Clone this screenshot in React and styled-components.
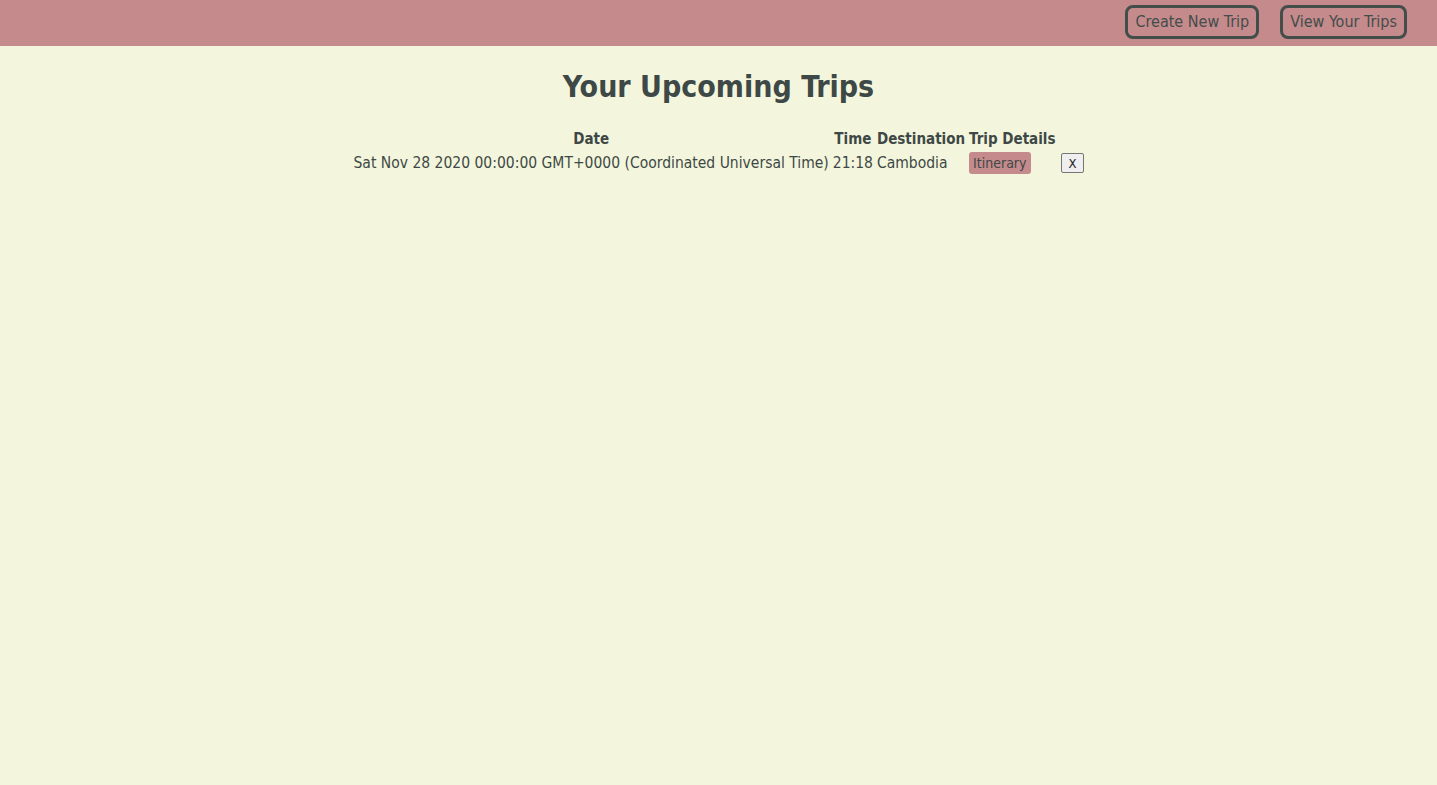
import React from "react";
import styled, { createGlobalStyle } from "styled-components";

const Global = createGlobalStyle`
  html, body { margin: 0; padding: 0; height: 100%; }
  body {
    background: #f3f6dc;
    color: #3e4846;
    font-family: "DejaVu Sans Condensed", "DejaVu Sans", sans-serif;
  }
  #root { min-height: 100%; }
`;

const Page = styled.div`
  min-height: 785px;
  background: #f3f6dc;
`;

const NavBar = styled.nav`
  height: 46px;
  background: #c48a8c;
  display: flex;
  align-items: center;
  justify-content: flex-end;
  gap: 21px;
  padding-right: 30px;
  box-sizing: border-box;
`;

const NavButton = styled.button`
  height: 34px;
  padding: 0 7px;
  background: transparent;
  border: 3px solid #434d4a;
  border-radius: 8px;
  color: #434d4a;
  font-family: inherit;
  font-size: 16px;
  cursor: pointer;
  margin-top: -3px;
`;

const Title = styled.h1`
  margin: 23px 0 22px;
  text-align: center;
  font-size: 30px;
  font-weight: bold;
  color: #3e4846;
  line-height: 36px;
`;

const Table = styled.table`
  margin: 0 auto;
  border-spacing: 2px;
  font-size: 15.5px;
  color: #3e4846;
`;

const Th = styled.th`
  padding: 1px;
  text-align: center;
  font-weight: bold;
  font-size: 15px;
`;

const Td = styled.td`
  padding: 1px;
  text-align: left;
  white-space: nowrap;
`;

const Badge = styled.span`
  display: inline-block;
  background: #c48a8c;
  border-radius: 3px;
  padding: 3px 4px 3px;
  font-size: 14px;
`;

const XButton = styled.button`
  margin-left: 2px;
  background: #efefef;
  border: 1px solid #767676;
  border-radius: 2px;
  font-family: "DejaVu Sans Condensed", "DejaVu Sans", sans-serif;
  font-size: 13px;
  color: #222;
  padding: 1px 6px;
  height: 20px;
`;

const trips = [
  {
    date: "Sat Nov 28 2020 00:00:00 GMT+0000 (Coordinated Universal Time)",
    time: "21:18",
    destination: "Cambodia",
  },
];

export default function App() {
  return (
    <Page>
      <Global />
      <NavBar>
        <NavButton>Create New Trip</NavButton>
        <NavButton>View Your Trips</NavButton>
      </NavBar>
      <Title>Your Upcoming Trips</Title>
      <Table>
        <thead>
          <tr>
            <Th>Date</Th>
            <Th>Time</Th>
            <Th>Destination</Th>
            <Th>Trip Details</Th>
            <Th></Th>
          </tr>
        </thead>
        <tbody>
          {trips.map((t, i) => (
            <tr key={i}>
              <Td>{t.date}</Td>
              <Td>{t.time}</Td>
              <Td>{t.destination}</Td>
              <Td>
                <Badge>Itinerary</Badge>
              </Td>
              <Td>
                <XButton>X</XButton>
              </Td>
            </tr>
          ))}
        </tbody>
      </Table>
    </Page>
  );
}
